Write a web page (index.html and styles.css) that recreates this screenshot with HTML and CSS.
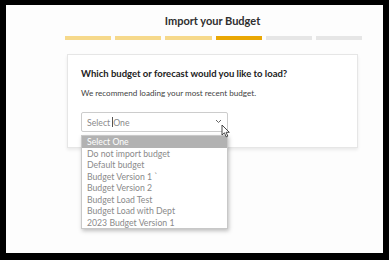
FILE: index.html
```html
<!DOCTYPE html>
<html>
<head>
<meta charset="utf-8">
<link rel="stylesheet" href="styles.css">
</head>
<body>
<div class="frame">
  <div class="column">
    <h1 class="title">Import your Budget</h1>
    <div class="steps">
      <span class="step done"></span>
      <span class="step done"></span>
      <span class="step done"></span>
      <span class="step active"></span>
      <span class="step"></span>
      <span class="step"></span>
    </div>
    <div class="card">
      <h2 class="question">Which budget or forecast would you like to load?</h2>
      <p class="hint">We recommend loading your most recent budget.</p>
      <div class="select-wrap">
        <div class="select">
          <span class="select-text">Select<span class="caret"></span>One</span>
          <svg class="chevron" width="7" height="5" viewBox="0 0 7 5"><path d="M1 1 L3.5 3.5 L6 1" fill="none" stroke="#666" stroke-width="1"/></svg>
        </div>
        <ul class="options">
          <li class="option selected">Select One</li>
          <li class="option">Do not import budget</li>
          <li class="option">Default budget</li>
          <li class="option">Budget Version 1 `</li>
          <li class="option">Budget Version 2</li>
          <li class="option">Budget Load Test</li>
          <li class="option">Budget Load with Dept</li>
          <li class="option">2023 Budget Version 1</li>
        </ul>
        <svg class="pointer" width="10" height="14" viewBox="0 0 10 14"><path d="M1 1 L1 11 L3.4 8.8 L5.2 12.8 L6.8 12.1 L5.1 8.3 L8.3 8.3 Z" fill="#fff" stroke="#333" stroke-width="0.9" stroke-linejoin="round"/></svg>
      </div>
    </div>
  </div>
</div>
</body>
</html>
```
FILE: styles.css
```css
html, body {
  margin: 0;
  padding: 0;
  background: #000;
}
body {
  width: 389px;
  height: 260px;
  overflow: hidden;
  font-family: "Lato", "Open Sans", "Liberation Sans", sans-serif;
}
.frame {
  margin: 5px 6px 0 6px;
  width: 377px;
  height: 248px;
  background: #fdfdfd;
  padding-top: 8px;
  box-sizing: border-box;
}
.column {
  margin-left: 59px;
  width: 297px;
}
.title {
  margin: 0 0 0 -2px;
  text-align: center;
  font-size: 11px;
  line-height: 16px;
  font-weight: 700;
  color: #2e2e2e;
}
.steps {
  display: flex;
  gap: 4px;
  margin-top: 7px;
}
.step {
  flex: 1;
  height: 4px;
  background: #e6e6e6;
}
.step.done { background: #f6d98b; }
.step.active { background: #e9a704; }
.card {
  margin: 14px 0 0 2px;
  width: 291px;
  box-sizing: border-box;
  background: #fff;
  border: 1px solid #e6e6e6;
  box-shadow: 0 2px 3px rgba(0,0,0,0.08);
  padding: 11px 13px 15px;
}
.question {
  margin: 0;
  font-size: 9.5px;
  line-height: 16px;
  font-weight: 700;
  color: #222;
  white-space: nowrap;
}
.hint {
  margin: 5px 0 0;
  font-size: 8.1px;
  line-height: 12px;
  color: #444;
}
.select-wrap {
  position: relative;
  margin-top: 13px;
  width: 147px;
}
.select {
  height: 20px;
  box-sizing: border-box;
  border: 1px solid #ccc;
  border-radius: 2px;
  background: #fff;
  display: flex;
  align-items: center;
  justify-content: space-between;
  padding: 0 5px 0 5px;
}
.select-text {
  font-size: 8.7px;
  color: #8a8a8a;
  display: flex;
  align-items: center;
}
.caret {
  display: inline-block;
  width: 1px;
  height: 10px;
  background: #555;
  margin: 0 0 0 2px;
}
.chevron {
  margin-top: -2px;
}
.options {
  position: absolute;
  top: 23px;
  left: 0;
  width: 147px;
  box-sizing: border-box;
  margin: 0;
  padding: 0;
  list-style: none;
  background: #fff;
  border: 1px solid #c8c8c8;
  box-shadow: 1px 2px 4px rgba(0,0,0,0.25);
}
.option {
  height: 11.5px;
  line-height: 11.5px;
  font-size: 8.7px;
  color: #8a8a8a;
  padding-left: 5px;
  white-space: nowrap;
}
.option.selected {
  background: #b2b2b2;
  color: #fff;
}
.pointer {
  position: absolute;
  left: 140px;
  top: 12px;
}
```
